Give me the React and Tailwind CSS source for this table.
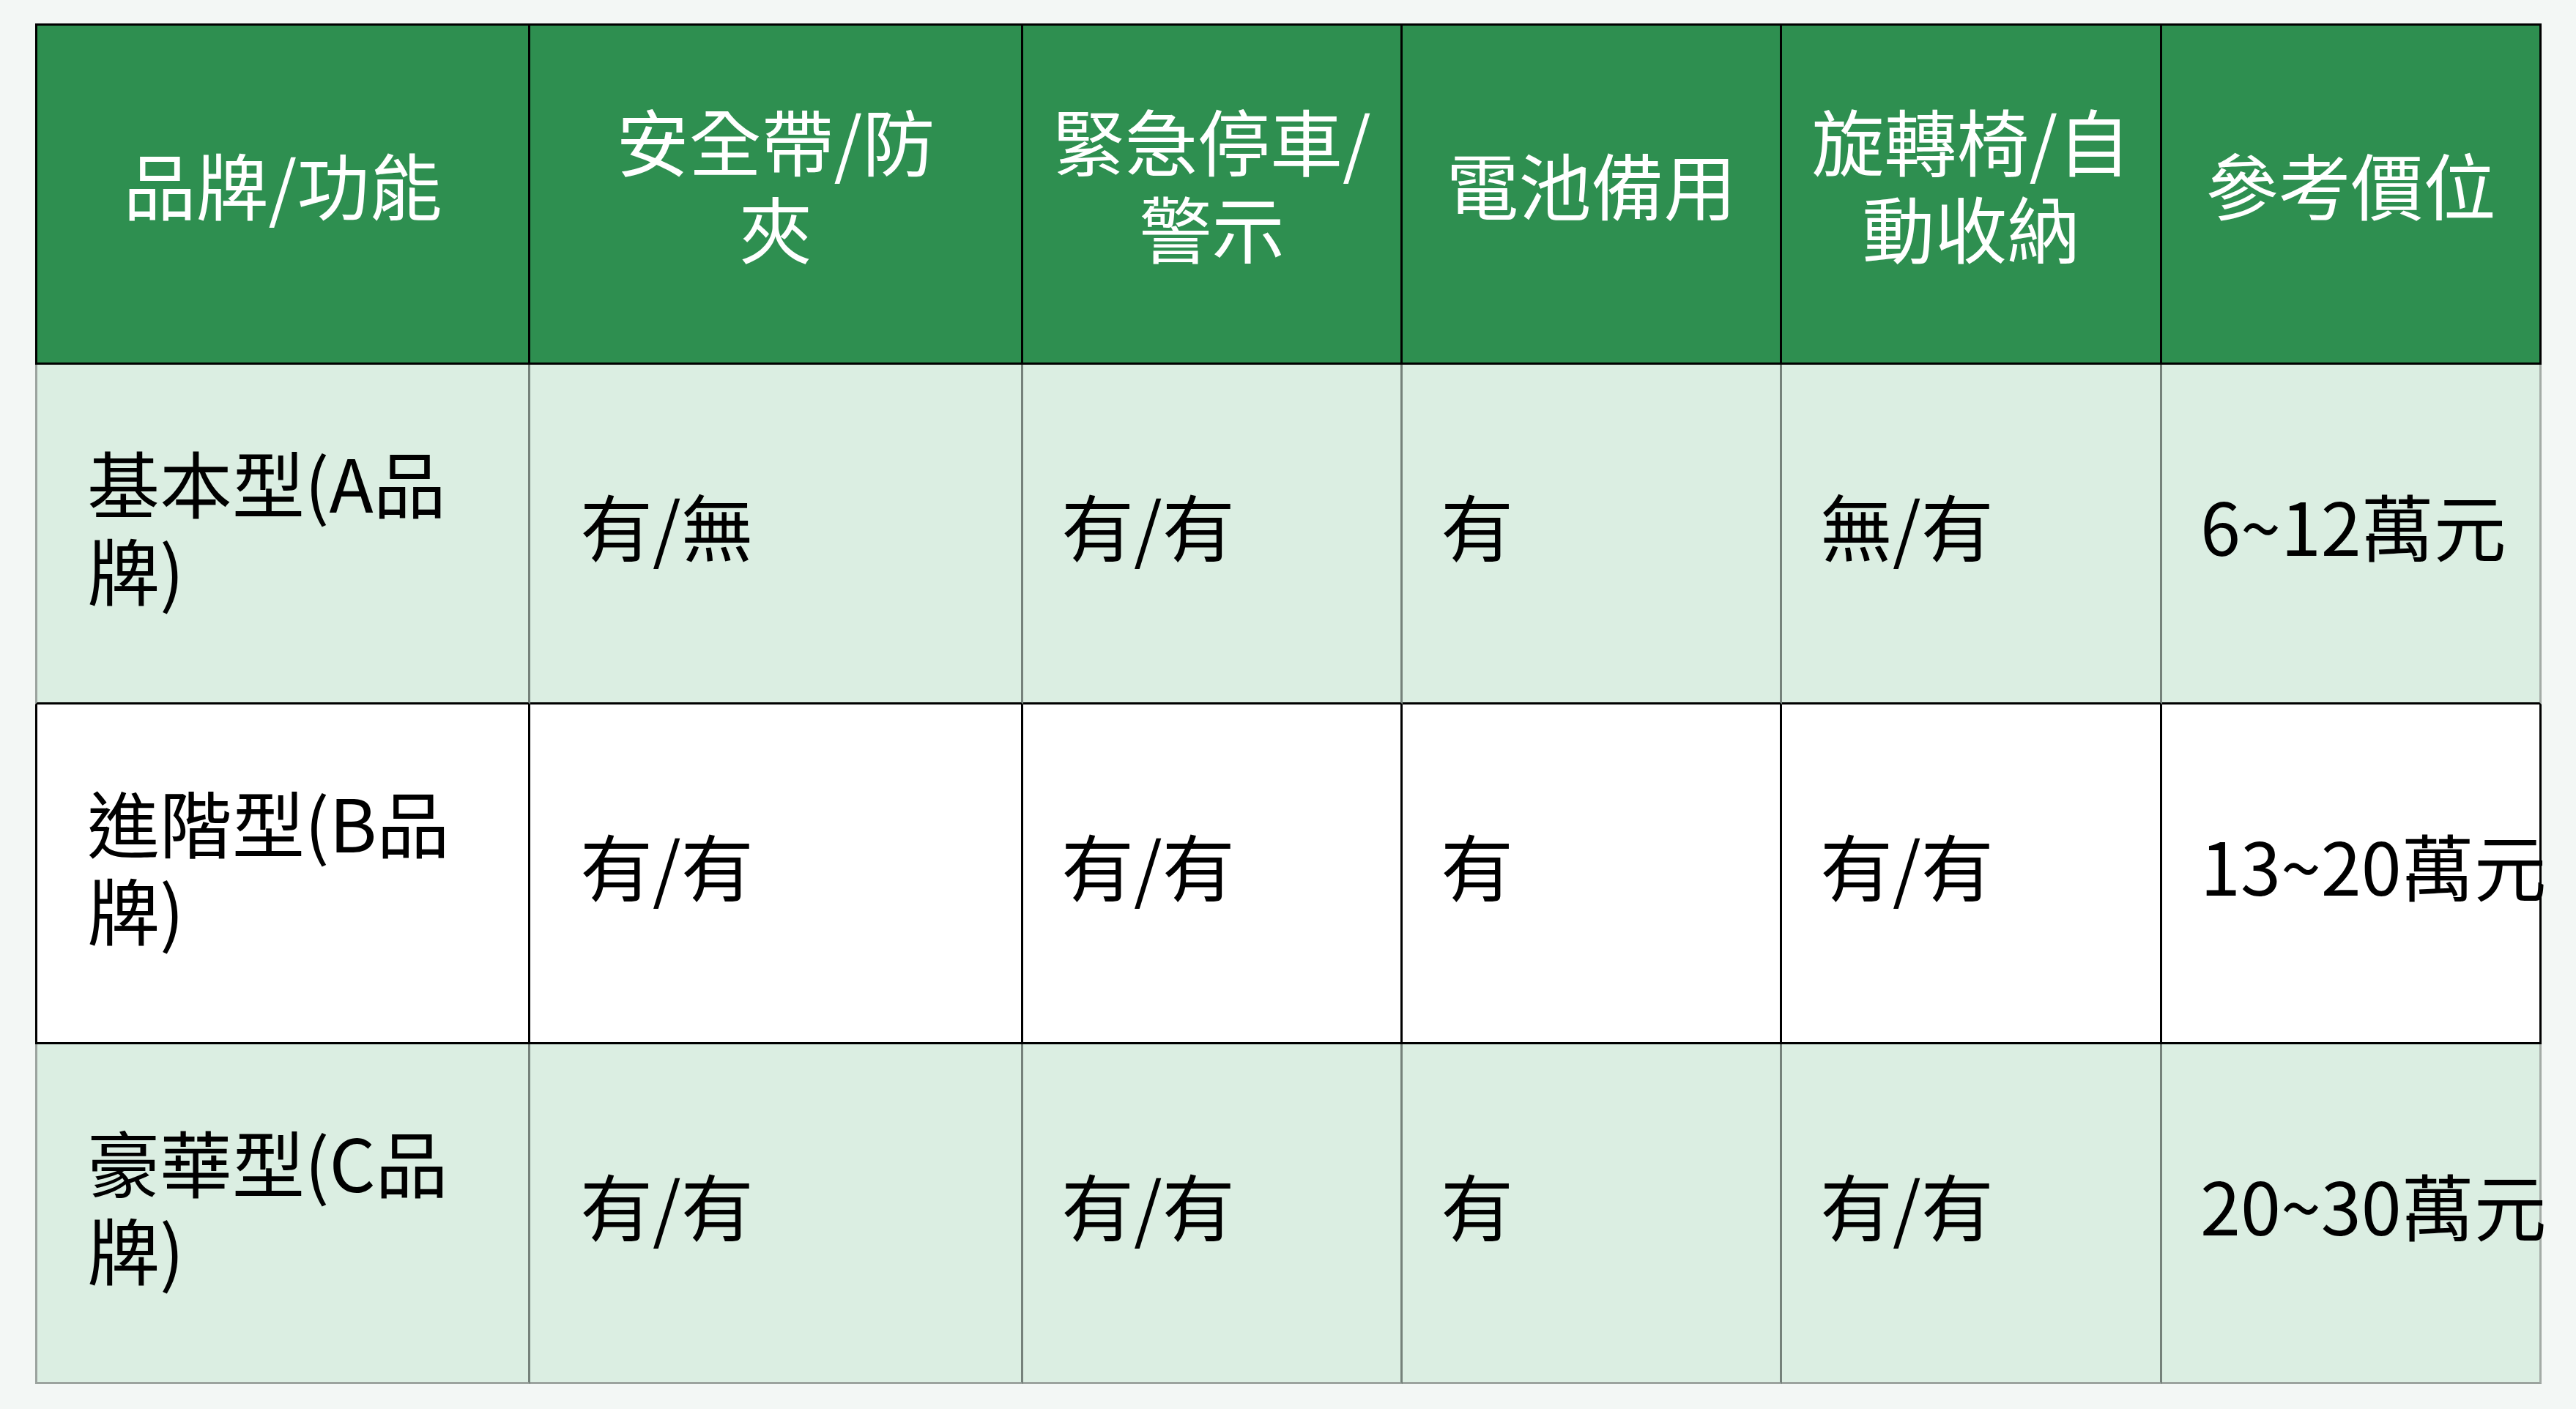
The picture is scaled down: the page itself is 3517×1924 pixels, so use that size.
const headers = [
  ['品牌/功能'],
  ['安全帶/防', '夾'],
  ['緊急停車/', '警示'],
  ['電池備用'],
  ['旋轉椅/自', '動收納'],
  ['參考價位'],
]

const rows = [
  { name: ['基本型(A品', '牌)'], cells: ['有/無', '有/有', '有', '無/有', '6~12萬元'], tint: true, last: false },
  { name: ['進階型(B品', '牌)'], cells: ['有/有', '有/有', '有', '有/有', '13~20萬元'], tint: false, last: false },
  { name: ['豪華型(C品', '牌)'], cells: ['有/有', '有/有', '有', '有/有', '20~30萬元'], tint: true, last: true },
]

function Lines({ lines }) {
  return lines.map((l, i) => (
    <span key={i} className="block whitespace-nowrap">{l}</span>
  ))
}

export default function App() {
  return (
    <div
      className="min-h-screen bg-[#f3f7f5] pl-[48px] pt-[32px]"
      style={{ fontFamily: '"Noto Sans CJK TC", "Noto Sans", sans-serif' }}
    >
      <div className="grid w-max grid-cols-[676px_673px_518px_518px_519px_518px] text-[99px] leading-[1.2]">
        {/* header */}
        {headers.map((h, i) => (
          <div
            key={i}
            className={`flex h-[466px] items-center justify-center border-t-[3px] border-r-[3px] border-b-[3px] border-black bg-[#2e8f50] pb-[30px] text-center text-white ${i === 0 ? 'border-l-[3px]' : ''}`}
          >
            <div><Lines lines={h} /></div>
          </div>
        ))}

        {/* body */}
        {rows.map((r, ri) => {
          const bg = r.tint ? 'bg-[#dbeee2]' : 'bg-white'
          const inner = r.tint ? 'border-r-[#75817a]' : 'border-r-black'
          const bottom = r.last ? 'border-b-[#9ba39e]' : 'border-b-black'
          const outer = r.tint ? 'border-l-[#9ba39e]' : 'border-l-black'
          const right = r.tint ? 'border-r-[#a4aba6]' : 'border-r-black'
          return [r.name, ...r.cells].map((c, ci) => (
            <div
              key={`${ri}-${ci}`}
              className={`flex h-[464px] items-center border-r-[3px] border-b-[3px] pb-[24px] text-black ${bg} ${bottom} ${ci === 5 ? right : inner} ${ci === 0 ? `border-l-[3px] ${outer}` : ''} ${ci < 2 ? 'pl-[68px]' : 'pl-[52px]'}`}
            >
              <div>{Array.isArray(c) ? <Lines lines={c} /> : <span className="whitespace-nowrap">{c}</span>}</div>
            </div>
          ))
        })}
      </div>
    </div>
  )
}
